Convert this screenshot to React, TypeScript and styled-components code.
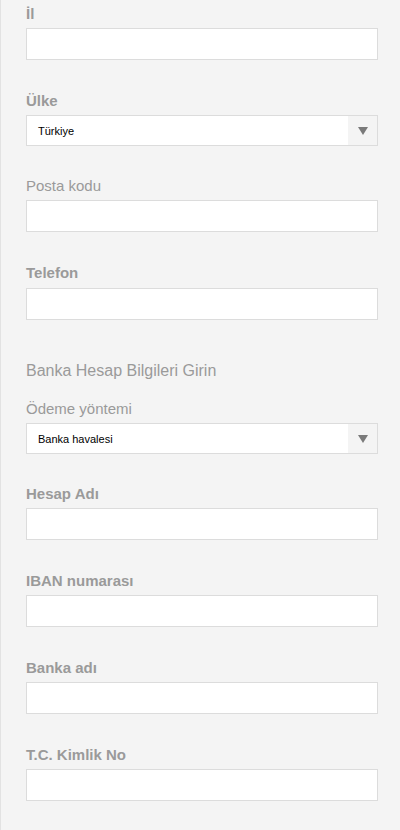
import React from "react";
import styled, { createGlobalStyle } from "styled-components";

const Global = createGlobalStyle`
  html, body {
    margin: 0;
    padding: 0;
    background: #f4f4f4;
  }
  body {
    font-family: "Liberation Sans", Arial, sans-serif;
  }
  * { box-sizing: border-box; }
`;

const Page = styled.div`
  min-height: 830px;
  background: #f4f4f4;
  border-left: 1px solid #e2e2e2;
  padding: 5px 22px 0 25px;
`;

const Field = styled.div<{ $gap?: number }>`
  display: flex;
  flex-direction: column;
  margin-bottom: ${(p) => p.$gap ?? 32}px;
`;

const Label = styled.label<{ $bold?: boolean; $mb?: number }>`
  display: block;
  font-size: 15px;
  line-height: 17px;
  height: 17px;
  color: #9a9a9a;
  font-weight: ${(p) => (p.$bold ? 700 : 400)};
  margin-bottom: ${(p) => p.$mb ?? 6}px;
`;

const Input = styled.input`
  display: block;
  width: 352px;
  height: 32px;
  margin: 0;
  padding: 0 10px;
  background: #fff;
  border: 1px solid #dcdcdc;
  border-radius: 0;
  outline: none;
  font-family: "Liberation Sans", Arial, sans-serif;
  font-size: 12px;
`;

const SelectBox = styled.div`
  display: flex;
  width: 352px;
  height: 31px;
  background: #fff;
  border: 1px solid #dcdcdc;
`;

const SelectValue = styled.div`
  flex: 1;
  display: flex;
  align-items: center;
  padding-left: 11px;
  font-size: 11px;
  color: #000;
`;

const ArrowCell = styled.div`
  width: 29px;
  display: flex;
  align-items: center;
  justify-content: center;
  background: #f4f4f4;
`;

const Heading = styled.div`
  font-size: 16px;
  line-height: 18px;
  color: #9a9a9a;
  margin-top: 42px;
  margin-bottom: 20px;
`;

const Arrow = () => (
  <svg width="10" height="8" viewBox="0 0 10 8">
    <polygon points="0,0 10,0 5,8" fill="#7a7a7a" />
  </svg>
);

const Select = ({ value }: { value: string }) => (
  <SelectBox>
    <SelectValue>{value}</SelectValue>
    <ArrowCell>
      <Arrow />
    </ArrowCell>
  </SelectBox>
);

export default function App() {
  return (
    <>
      <Global />
      <Page>
        <Field>
          <Label $bold>İl</Label>
          <Input />
        </Field>
        <Field $gap={31}>
          <Label $bold>Ülke</Label>
          <Select value="Türkiye" />
        </Field>
        <Field>
          <Label>Posta kodu</Label>
          <Input />
        </Field>
        <Field $gap={0}>
          <Label $bold $mb={7}>Telefon</Label>
          <Input />
        </Field>
        <Heading>Banka Hesap Bilgileri Girin</Heading>
        <Field $gap={31}>
          <Label>Ödeme yöntemi</Label>
          <Select value="Banka havalesi" />
        </Field>
        <Field>
          <Label $bold>Hesap Adı</Label>
          <Input />
        </Field>
        <Field>
          <Label $bold>IBAN numarası</Label>
          <Input />
        </Field>
        <Field>
          <Label $bold>Banka adı</Label>
          <Input />
        </Field>
        <Field>
          <Label $bold>T.C. Kimlik No</Label>
          <Input />
        </Field>
      </Page>
    </>
  );
}
